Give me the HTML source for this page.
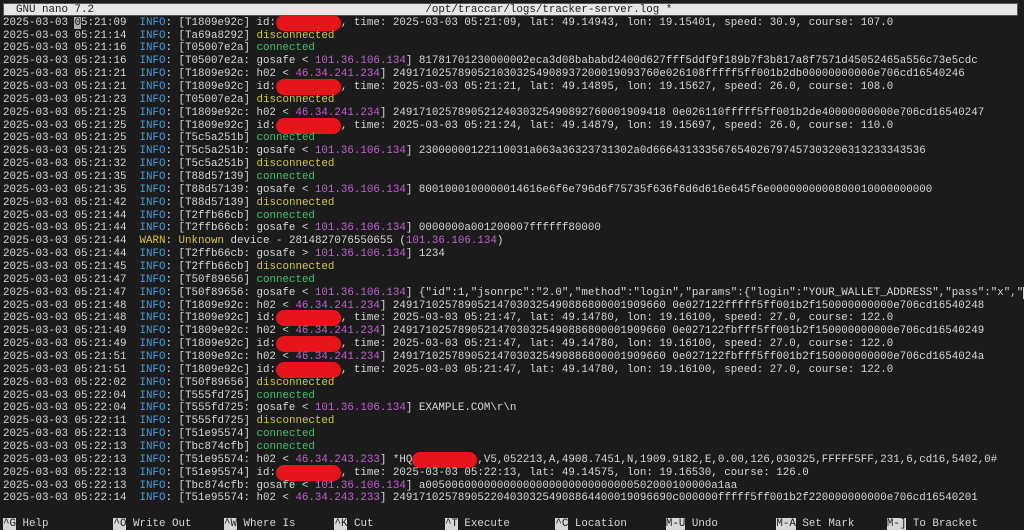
<!DOCTYPE html>
<html><head><meta charset="utf-8"><style>
html,body{margin:0;padding:0;background:#1b1b1b;width:1024px;height:524px;overflow:hidden}
#t{position:absolute;left:3px;top:3px;width:1015px;height:13px;background:#e6e6e6;border:1px solid #555;box-sizing:border-box}
.l{position:absolute;left:3px;white-space:pre;font-family:"Liberation Mono",monospace;font-size:10.83px;line-height:12.86px;height:12.86px;color:#d6d6d6;padding-top:2px}
.i{color:#3f9fdc}.w{color:#d6c43c}.y{color:#cfc83c}.g{color:#3cc06a}.m{color:#c060d0}
.r{background:#e8141c;border-radius:9px;color:transparent;padding:2px 0 2px 0}
.k{background:#d6d6d6;color:#1b1b1b}
.cur{background:#aaa;color:#1b1b1b}
</style></head><body>
<div id="t"></div>
<div class="l" style="top:1.5px;color:#1b1b1b">  GNU nano 7.2                                                   /opt/traccar/logs/tracker-server.log *</div>
<div class="l" style="top:14.6px">2025-03-03 <span class="cur">0</span>5:21:09  <span class="i">INFO</span>: [T1809e92c] id:<span class="r">xxxxxxxxxx</span>, time: 2025-03-03 05:21:09, lat: 49.14943, lon: 19.15401, speed: 30.9, course: 107.0</div>
<div class="l" style="top:27.5px">2025-03-03 05:21:14  <span class="i">INFO</span>: [Ta69a8292] <span class="y">disconnected</span></div>
<div class="l" style="top:40.3px">2025-03-03 05:21:16  <span class="i">INFO</span>: [T05007e2a] <span class="g">connected</span></div>
<div class="l" style="top:53.2px">2025-03-03 05:21:16  <span class="i">INFO</span>: [T05007e2a: gosafe &lt; <span class="m">101.36.106.134</span>] 81781701230000002eca3d08bababd2400d627fff5ddf9f189b7f3b817a8f7571d45052465a556c73e5cdc</div>
<div class="l" style="top:66.0px">2025-03-03 05:21:21  <span class="i">INFO</span>: [T1809e92c: h02 &lt; <span class="m">46.34.241.234</span>] 24917102578905210303254908937200019093760e026108fffff5ff001b2db00000000000e706cd16540246</div>
<div class="l" style="top:78.9px">2025-03-03 05:21:21  <span class="i">INFO</span>: [T1809e92c] id:<span class="r">xxxxxxxxxx</span>, time: 2025-03-03 05:21:21, lat: 49.14895, lon: 19.15627, speed: 26.0, course: 108.0</div>
<div class="l" style="top:91.8px">2025-03-03 05:21:23  <span class="i">INFO</span>: [T05007e2a] <span class="y">disconnected</span></div>
<div class="l" style="top:104.6px">2025-03-03 05:21:25  <span class="i">INFO</span>: [T1809e92c: h02 &lt; <span class="m">46.34.241.234</span>] 249171025789052124030325490892760001909418 0e026110fffff5ff001b2de40000000000e706cd16540247</div>
<div class="l" style="top:117.5px">2025-03-03 05:21:25  <span class="i">INFO</span>: [T1809e92c] id:<span class="r">xxxxxxxxxx</span>, time: 2025-03-03 05:21:24, lat: 49.14879, lon: 19.15697, speed: 26.0, course: 110.0</div>
<div class="l" style="top:130.3px">2025-03-03 05:21:25  <span class="i">INFO</span>: [T5c5a251b] <span class="g">connected</span></div>
<div class="l" style="top:143.2px">2025-03-03 05:21:25  <span class="i">INFO</span>: [T5c5a251b: gosafe &lt; <span class="m">101.36.106.134</span>] 23000000122110031a063a36323731302a0d666431333567654026797457303206313233343536</div>
<div class="l" style="top:156.0px">2025-03-03 05:21:32  <span class="i">INFO</span>: [T5c5a251b] <span class="y">disconnected</span></div>
<div class="l" style="top:168.9px">2025-03-03 05:21:35  <span class="i">INFO</span>: [T88d57139] <span class="g">connected</span></div>
<div class="l" style="top:181.8px">2025-03-03 05:21:35  <span class="i">INFO</span>: [T88d57139: gosafe &lt; <span class="m">101.36.106.134</span>] 8001000100000014616e6f6e796d6f75735f636f6d6d616e645f6e0000000000800010000000000</div>
<div class="l" style="top:194.6px">2025-03-03 05:21:42  <span class="i">INFO</span>: [T88d57139] <span class="y">disconnected</span></div>
<div class="l" style="top:207.5px">2025-03-03 05:21:44  <span class="i">INFO</span>: [T2ffb66cb] <span class="g">connected</span></div>
<div class="l" style="top:220.3px">2025-03-03 05:21:44  <span class="i">INFO</span>: [T2ffb66cb: gosafe &lt; <span class="m">101.36.106.134</span>] 0000000a001200007ffffff80000</div>
<div class="l" style="top:233.2px">2025-03-03 05:21:44  <span class="w">WARN</span>: <span class="w">Unknown</span> device - 2814827076550655 (<span class="m">101.36.106.134</span>)</div>
<div class="l" style="top:246.1px">2025-03-03 05:21:44  <span class="i">INFO</span>: [T2ffb66cb: gosafe &gt; <span class="m">101.36.106.134</span>] 1234</div>
<div class="l" style="top:258.9px">2025-03-03 05:21:45  <span class="i">INFO</span>: [T2ffb66cb] <span class="y">disconnected</span></div>
<div class="l" style="top:271.8px">2025-03-03 05:21:47  <span class="i">INFO</span>: [T50f89656] <span class="g">connected</span></div>
<div class="l" style="top:284.6px">2025-03-03 05:21:47  <span class="i">INFO</span>: [T50f89656: gosafe &lt; <span class="m">101.36.106.134</span>] {"id":1,"jsonrpc":"2.0","method":"login","params":{"login":"YOUR_WALLET_ADDRESS","pass":"x","<span class="k">&gt;</span></div>
<div class="l" style="top:297.5px">2025-03-03 05:21:48  <span class="i">INFO</span>: [T1809e92c: h02 &lt; <span class="m">46.34.241.234</span>] 249171025789052147030325490886800001909660 0e027122fffff5ff001b2f150000000000e706cd16540248</div>
<div class="l" style="top:310.3px">2025-03-03 05:21:48  <span class="i">INFO</span>: [T1809e92c] id:<span class="r">xxxxxxxxxx</span>, time: 2025-03-03 05:21:47, lat: 49.14780, lon: 19.16100, speed: 27.0, course: 122.0</div>
<div class="l" style="top:323.2px">2025-03-03 05:21:49  <span class="i">INFO</span>: [T1809e92c: h02 &lt; <span class="m">46.34.241.234</span>] 249171025789052147030325490886800001909660 0e027122fbfff5ff001b2f150000000000e706cd16540249</div>
<div class="l" style="top:336.1px">2025-03-03 05:21:49  <span class="i">INFO</span>: [T1809e92c] id:<span class="r">xxxxxxxxxx</span>, time: 2025-03-03 05:21:47, lat: 49.14780, lon: 19.16100, speed: 27.0, course: 122.0</div>
<div class="l" style="top:348.9px">2025-03-03 05:21:51  <span class="i">INFO</span>: [T1809e92c: h02 &lt; <span class="m">46.34.241.234</span>] 249171025789052147030325490886800001909660 0e027122fbfff5ff001b2f150000000000e706cd1654024a</div>
<div class="l" style="top:361.8px">2025-03-03 05:21:51  <span class="i">INFO</span>: [T1809e92c] id:<span class="r">xxxxxxxxxx</span>, time: 2025-03-03 05:21:47, lat: 49.14780, lon: 19.16100, speed: 27.0, course: 122.0</div>
<div class="l" style="top:374.6px">2025-03-03 05:22:02  <span class="i">INFO</span>: [T50f89656] <span class="y">disconnected</span></div>
<div class="l" style="top:387.5px">2025-03-03 05:22:04  <span class="i">INFO</span>: [T555fd725] <span class="g">connected</span></div>
<div class="l" style="top:400.3px">2025-03-03 05:22:04  <span class="i">INFO</span>: [T555fd725: gosafe &lt; <span class="m">101.36.106.134</span>] EXAMPLE.COM\r\n</div>
<div class="l" style="top:413.2px">2025-03-03 05:22:11  <span class="i">INFO</span>: [T555fd725] <span class="y">disconnected</span></div>
<div class="l" style="top:426.1px">2025-03-03 05:22:13  <span class="i">INFO</span>: [T51e95574] <span class="g">connected</span></div>
<div class="l" style="top:438.9px">2025-03-03 05:22:13  <span class="i">INFO</span>: [Tbc874cfb] <span class="g">connected</span></div>
<div class="l" style="top:451.8px">2025-03-03 05:22:13  <span class="i">INFO</span>: [T51e95574: h02 &lt; <span class="m">46.34.243.233</span>] *HQ<span class="r">xxxxxxxxxx</span>,V5,052213,A,4908.7451,N,1909.9182,E,0.00,126,030325,FFFFF5FF,231,6,cd16,5402,0#</div>
<div class="l" style="top:464.6px">2025-03-03 05:22:13  <span class="i">INFO</span>: [T51e95574] id:<span class="r">xxxxxxxxxx</span>, time: 2025-03-03 05:22:13, lat: 49.14575, lon: 19.16530, course: 126.0</div>
<div class="l" style="top:477.5px">2025-03-03 05:22:13  <span class="i">INFO</span>: [Tbc874cfb: gosafe &lt; <span class="m">101.36.106.134</span>] a00500600000000000000000000000000502000100000a1aa</div>
<div class="l" style="top:490.3px">2025-03-03 05:22:14  <span class="i">INFO</span>: [T51e95574: h02 &lt; <span class="m">46.34.243.233</span>] 2491710257890522040303254908864400019096690c000000fffff5ff001b2f220000000000e706cd16540201</div>
<div class="l" style="top:515.5px"><span class="k">^G</span> Help          <span class="k">^O</span> Write Out     <span class="k">^W</span> Where Is      <span class="k">^K</span> Cut           <span class="k">^T</span> Execute       <span class="k">^C</span> Location      <span class="k">M-U</span> Undo         <span class="k">M-A</span> Set Mark     <span class="k">M-]</span> To Bracket</div>
</body></html>
